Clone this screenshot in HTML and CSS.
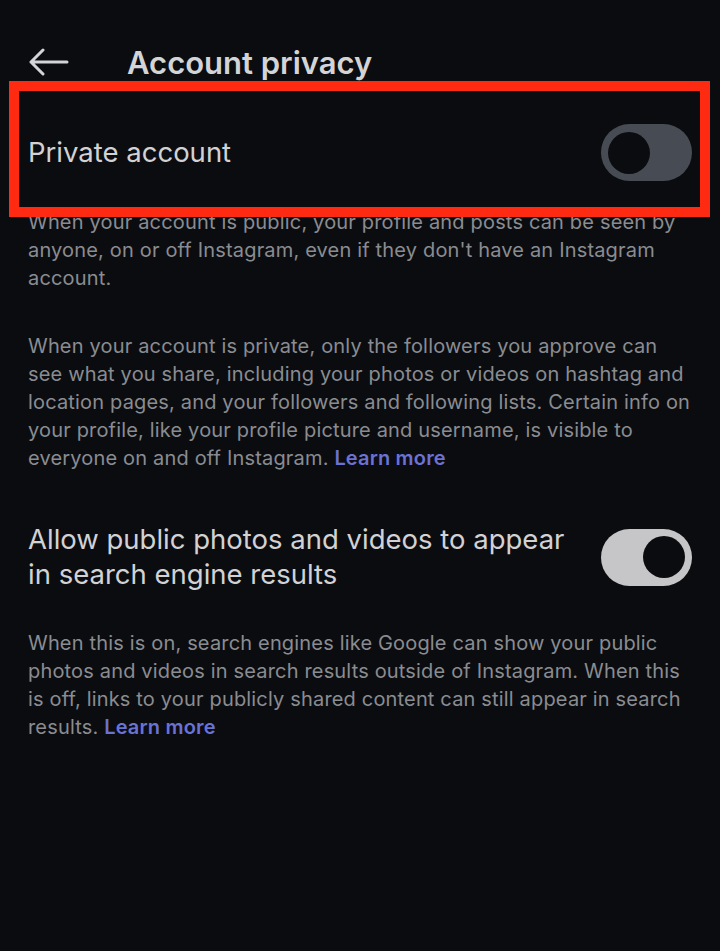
FILE: index.html
```html
<!DOCTYPE html>
<html lang="en">
<head>
    <meta charset="UTF-8">
    <meta name="viewport" content="width=device-width, initial-scale=1.0">
    <title>Account privacy</title>
    <link rel="stylesheet" href="styles.css">
</head>
<body>
    <div class="screen">
        <!-- Top bar -->
        <div class="top-bar">
            <svg class="back-icon" width="40" height="28" viewBox="0 0 40 28">
                <path d="M2 14 H38 M14 2 L2 14 L14 26" fill="none" stroke="#d4d4d6" stroke-width="3" stroke-linecap="round" stroke-linejoin="round"/>
            </svg>
            <h1 class="title">Account privacy</h1>
        </div>

        <!-- Private account row (highlighted) -->
        <div class="setting-row highlighted">
            <span class="setting-label">Private account</span>
            <div class="switch off"><span class="knob"></span></div>
        </div>

        <p class="note">When your account is public, your profile and posts can be seen by anyone, on or off Instagram, even if they don't have an Instagram account.</p>
        <p class="note spaced">When your account is private, only the followers you approve can see what you share, including your photos or videos on hashtag and location pages, and your followers and following lists. Certain info on your profile, like your profile picture and username, is visible to everyone on and off Instagram. <a href="#" class="link">Learn more</a></p>

        <div class="setting-row search-row">
            <span class="setting-label">Allow public photos and videos to appear in search engine results</span>
            <div class="switch on"><span class="knob"></span></div>
        </div>

        <p class="note">When this is on, search engines like Google can show your public photos and videos in search results outside of Instagram. When this is off, links to your publicly shared content can still appear in search results. <a href="#" class="link">Learn more</a></p>
    </div>
</body>
</html>
```

FILE: styles.css
```css
body {
    margin: 0;
    padding: 0;
    background-color: #0b0c10;
    font-family: Inter, "Noto Sans", sans-serif;
}
.screen {
    width: 720px;
    height: 951px;
    box-sizing: border-box;
    padding: 0 28px;
}

/* Top bar */
.top-bar {
    display: flex;
    align-items: center;
    height: 60px;
    padding-top: 32px;
}
.back-icon {
    margin-left: 1px;
    margin-right: 58px;
}
.title {
    margin: 0;
    font-size: 31px;
    font-weight: 600;
    color: #d4d4d6;
}

/* Setting rows */
.setting-row {
    display: flex;
    align-items: center;
    justify-content: space-between;
}
.setting-label {
    font-size: 27.5px;
    line-height: 35px;
    color: #d2d2d4;
    max-width: 550px;
}
.highlighted {
    position: relative;
    box-sizing: border-box;
    height: 116px;
    padding-top: 5px;
}
/* red annotation frame */
.highlighted::after {
    content: "";
    position: absolute;
    left: -19px;
    right: -18px;
    top: -11px;
    bottom: -9px;
    border: 10px solid #ff2a12;
}
.search-row {
    margin-top: 50px;
}

/* Switch */
.switch {
    width: 91px;
    height: 57px;
    border-radius: 29px;
    display: flex;
    align-items: center;
    box-sizing: border-box;
    padding: 0 7px;
    flex-shrink: 0;
}
.switch .knob {
    width: 42px;
    height: 42px;
    border-radius: 50%;
    background-color: #0b0c10;
}
.switch.off {
    background-color: #474c54;
}
.switch.on {
    background-color: #c6c6c8;
    justify-content: flex-end;
}

/* Notes */
.note {
    margin: 0;
    font-size: 20px;
    line-height: 28px;
    letter-spacing: 0.17px;
    color: #8a8c91;
}
.note.spaced {
    margin-top: 40px;
}
.search-row + .note {
    margin-top: 37px;
}
.link {
    color: #6a72d4;
    font-weight: 600;
    text-decoration: none;
}
```
